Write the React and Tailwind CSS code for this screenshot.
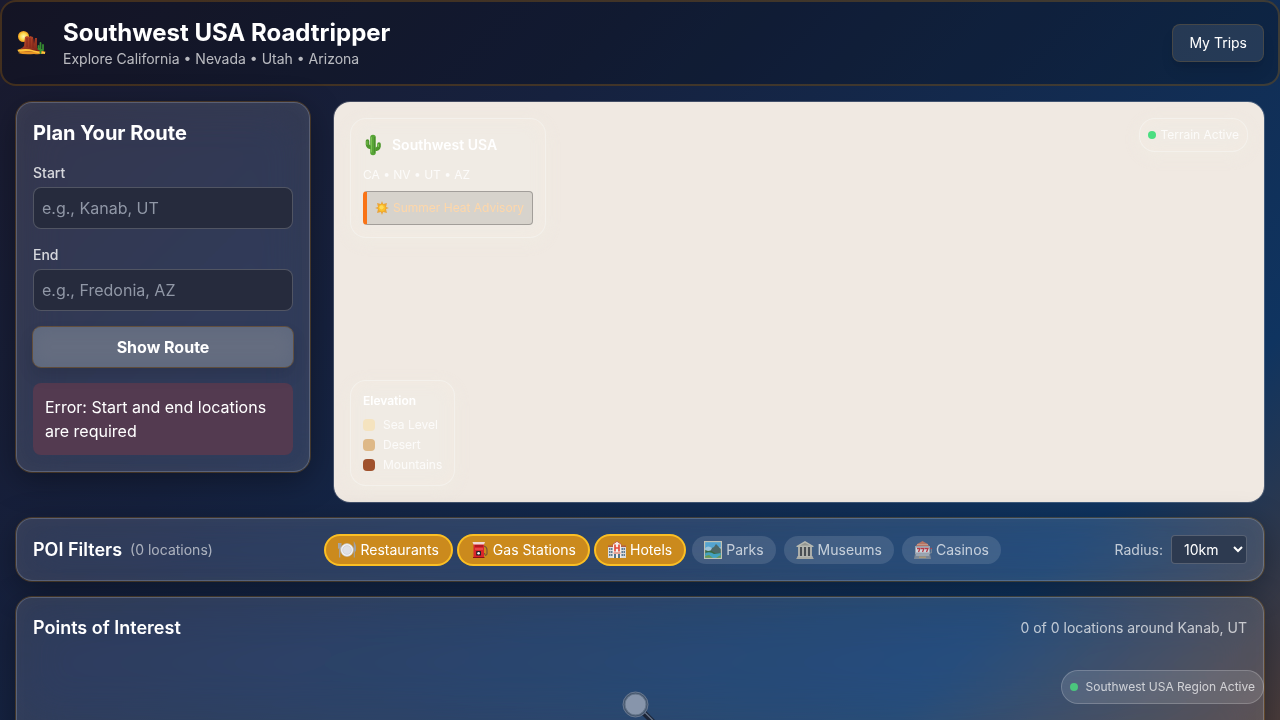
const panel =
  "rounded-2xl border border-white/20 bg-white/12 p-4 outline-1 outline-amber-500/20 backdrop-blur-xl backdrop-saturate-125 shadow-[0_8px_32px_rgba(0,0,0,0.35),inset_0_0_20px_rgba(255,255,255,0.03)]";
const mapCard =
  "absolute rounded-2xl border border-white/30 bg-[#f0ebe4] shadow-[0_4px_16px_rgba(240,236,226,0.6),inset_0_0_16px_rgba(245,233,224,0.6)]";

function DesertIcon() {
  return (
    <svg viewBox="0 0 31 26" className="h-[26px] w-[31px]" aria-hidden="true">
      <defs>
        <radialGradient id="desert-sun" cx="0.5" cy="0.5" r="0.5">
          <stop offset="0" stopColor="#fff6b0" />
          <stop offset="0.6" stopColor="#fbd84b" />
          <stop offset="1" stopColor="#f09a1c" />
        </radialGradient>
        <linearGradient id="desert-rock" x1="0" y1="0" x2="1" y2="1">
          <stop offset="0" stopColor="#c9502c" />
          <stop offset="1" stopColor="#6f1f17" />
        </linearGradient>
      </defs>
      <circle cx="7.5" cy="6.5" r="5.5" fill="url(#desert-sun)" />
      <path d="M1 20Q8 17 15 18T30 22Q26 25 18 24Q8 25 2 23Q6 22 1 20Z" fill="#e89524" />
      <path d="M4 20L8 16L9 7L11 6L13 7L14 6L17 7L18 14L19 8L21 8L21 18L26 21L18 22L7 21Z" fill="url(#desert-rock)" />
      <path d="M11 8V17M14 8V18M17 9V18" stroke="#7f2219" strokeWidth="0.8" />
      <path d="M2 21Q10 19 17 21T29 23" stroke="#ffc53c" strokeWidth="1.8" fill="none" />
      <path d="M24.500 23V13M22.500 16V19H24.500M27 15V20H24.500" stroke="#378b32" strokeWidth="1.8" strokeLinecap="round" strokeLinejoin="round" fill="none" />
    </svg>
  );
}

function CactusIcon() {
  return (
    <svg viewBox="0 0 21 22" className="h-[22px] w-[21px]" aria-hidden="true">
      <g fill="none" strokeLinecap="round" strokeLinejoin="round">
        <path d="M4.500 7V10.500Q5 13.500 9 13.500M16 10V12.500Q15.500 15.500 11 15.500" stroke="#4e962d" strokeWidth="3.6" />
        <path d="M10 3.500V18.500" stroke="#57a436" strokeWidth="5.600" />
        <path d="M8.500 3.500V18M4 7.500V10.500M15.500 10.500V12.500" stroke="#7cc352" strokeWidth="1" />
        <path d="M11.500 3.500V18.500" stroke="#4a8c30" strokeWidth="1" />
      </g>
    </svg>
  );
}

function SunIcon() {
  return (
    <svg viewBox="0 0 15 15" className="size-[14px]" aria-hidden="true">
      <path d="M7.500 0L8.700 3.200L12.800 2.200L11.800 6.300L15 7.500L11.800 8.700L12.800 12.800L8.700 11.800L7.500 15L6.300 11.800L2.200 12.800L3.200 8.700L0 7.500L3.200 6.300L2.200 2.200L6.300 3.200Z" fill="#e9a43c" />
      <circle cx="7.500" cy="7.500" r="4.200" fill="#fbc02d" stroke="#eda126" strokeWidth="0.6" />
      <circle cx="7" cy="6.800" r="2.200" fill="#ffdb58" />
    </svg>
  );
}

function PlateIcon() {
  return (
    <svg viewBox="0 0 18 18" className="size-[18px]" aria-hidden="true">
      <path d="M0.500 2V6Q0.500 8 1.700 8V16.500M2.900 2V6Q2.900 8 1.700 8M1.700 2V7" stroke="#a3a6ac" strokeWidth="1.100" fill="none" />
      <path d="M16.300 16.500V2Q18 5 17.300 10H16.300" stroke="#9da1a8" fill="#b9bdc3" strokeWidth="1.100" />
      <circle cx="9" cy="9" r="6.400" fill="#f4f4f5" stroke="#b9bcc2" strokeWidth="0.6" />
      <circle cx="9" cy="9" r="4.400" fill="#dfe0e4" stroke="#c6c8ce" strokeWidth="0.6" />
    </svg>
  );
}

function FuelIcon() {
  return (
    <svg viewBox="0 0 18 18" className="size-[18px]" aria-hidden="true">
      <path d="M13 5Q16 6 16 9V13Q14 16 13.500 12" stroke="#7a5638" strokeWidth="1.200" fill="none" />
      <rect x="2.500" y="2" width="10.500" height="15" rx="1" fill="#d9252c" />
      <path d="M1.500 1H14L13 3.500H2.500Z" fill="#efd9d5" />
      <rect x="4" y="4" width="8" height="2" fill="#b01a22" />
      <rect x="4" y="7.500" width="8" height="1" fill="#f26b63" />
      <rect x="5.200" y="10" width="4.800" height="4.500" rx="0.5" fill="#262328" />
      <circle cx="7.600" cy="12.200" r="1.300" fill="#f5f5f5" />
      <path d="M2 16.500H13.500" stroke="#8b1018" strokeWidth="1" />
    </svg>
  );
}

function HotelIcon() {
  return (
    <svg viewBox="0 0 18 18" className="size-[18px]" aria-hidden="true">
      <path d="M0 5H18V17H0Z" fill="#dcdcdc" />
      <path d="M0 4.500H5V6H0ZM13 4.500H18V6H13Z" fill="#b35c43" />
      <path d="M5 3L9 0L13 3V17H5Z" fill="#f4efeb" />
      <path d="M4.500 3.500L9 0.300L13.500 3.500" stroke="#c0553f" strokeWidth="1" fill="none" />
      <path d="M7 3.500V10.500M11 3.500V10.500M7 7H11" stroke="#e54a3b" strokeWidth="1.700" />
      <path d="M1 8H2.500M3 8H4.500M1 11H2.500M3 11H4.500M1 14H2.500M3 14H4.500M13.500 8H15M15.500 8H17M13.500 11H15M15.500 11H17M13.500 14H15M15.500 14H17" stroke="#627d94" strokeWidth="1.800" />
      <path d="M6 13H8V17H6ZM10 13H12V17H10Z" fill="#54758a" />
      <path d="M5.500 12H12.500" stroke="#d45b46" strokeWidth="1" />
    </svg>
  );
}

function ParkIcon() {
  return (
    <svg viewBox="0 0 18 18" className="size-[18px]" aria-hidden="true">
      <rect width="18" height="18" fill="#e0dbc2" />
      <rect x="1.200" y="1.200" width="15.600" height="15.600" fill="#58b6e4" />
      <path d="M1.200 7Q4 4 8 7L12 7L16.800 6V12H1.200Z" fill="#b5def0" />
      <path d="M6 11L8 7L10 6L12 3L14 5L16.800 8V12H6Z" fill="#506b62" />
      <path d="M1.200 9L4 10L7 9.500L11 12H16.800V14H1.200Z" fill="#3c6b35" />
      <path d="M1.200 12Q6 10 10 13L16.800 12V16.800H1.200Z" fill="#45b3cf" />
      <path d="M1.200 15L5 14L9 16.800H1.200ZM12 16.800L16.800 14V16.800Z" fill="#79a843" />
    </svg>
  );
}

function MuseumIcon() {
  return (
    <svg viewBox="0 0 18 18" className="size-[18px]" aria-hidden="true">
      <path d="M0.500 5L9 0L17.500 5V6H0.500Z" fill="#d4cfbd" />
      <path d="M4 4.500L9 1.800L14 4.500Z" fill="#a8a393" />
      <rect x="2" y="6" width="14" height="9" fill="#4c4b48" />
      <path d="M3 6V15M7 6V15M11 6V15M15 6V15" stroke="#d4cfbf" strokeWidth="1.800" />
      <path d="M2 15H16L18 18H0Z" fill="#b8b3a2" />
      <path d="M1.500 15.500H16.500M1 17H17" stroke="#dad5c5" strokeWidth="0.700" />
    </svg>
  );
}

function SlotIcon() {
  return (
    <svg viewBox="0 0 18 18" className="size-[18px]" aria-hidden="true">
      <path d="M2 5Q3 2 6 1.500L8.500 0L11 1.500Q14 2 15 5Z" fill="#d5795b" />
      <path d="M3 3.500H14" stroke="#e8b192" strokeWidth="0.800" />
      <path d="M1 5H16V13H1Z" fill="#adb2b8" />
      <rect x="2" y="6.500" width="13" height="5" fill="#f2f2f2" />
      <path d="M3 7.500H6L4.500 11M7 7.500H10L8.500 11M11 7.500H14L12.500 11" stroke="#d33137" strokeWidth="1.300" fill="none" />
      <path d="M1 13H16L17 18H0Z" fill="#8c9299" />
      <path d="M2 14H15" stroke="#d8dce0" strokeWidth="1" />
      <rect x="5" y="15.500" width="7" height="1.500" fill="#c3a674" />
      <path d="M16 12H17.300V8" stroke="#91969c" strokeWidth="1" fill="none" />
      <circle cx="17.200" cy="7.500" r="0.800" fill="#d53c3c" />
    </svg>
  );
}

function MagnifierIcon() {
  return (
    <svg viewBox="0 0 45 45" className="mx-auto size-[45px]" aria-hidden="true">
      <path d="M26 27L38 39" stroke="#1c2537" strokeWidth="5.500" strokeLinecap="round" />
      <path d="M27 26.500L38 37.500" stroke="#66748a" strokeWidth="1.200" strokeLinecap="round" />
      <circle cx="17.500" cy="18.500" r="11.500" fill="#8795ab" stroke="#45566d" strokeWidth="2.500" />
      <circle cx="17.500" cy="18.500" r="12.500" fill="none" stroke="#71829a" strokeWidth="0.800" />
      <circle cx="17.500" cy="18.500" r="10.500" fill="none" stroke="#6d7d92" strokeWidth="0.800" />
    </svg>
  );
}

const filters = [
  { Icon: PlateIcon, name: "Restaurants", on: true },
  { Icon: FuelIcon, name: "Gas Stations", on: true },
  { Icon: HotelIcon, name: "Hotels", on: true },
  { Icon: ParkIcon, name: "Parks", on: false },
  { Icon: MuseumIcon, name: "Museums", on: false },
  { Icon: SlotIcon, name: "Casinos", on: false },
];

const elevations = [
  { name: "Sea Level", swatch: "bg-[#f5e3bf]" },
  { name: "Desert", swatch: "bg-[#deb887]" },
  { name: "Mountains", swatch: "bg-[#a0522d]" },
];

function Field({ id, label, placeholder }) {
  return (
    <div className="mb-4">
      <label htmlFor={id} className="mb-1 block text-sm font-medium leading-5 text-white/80">{label}</label>
      <input
        id={id}
        type="text"
        placeholder={placeholder}
        className="block w-full rounded-lg border border-white/20 bg-[#262b3d] p-2 text-base leading-6 text-white placeholder:text-[#9097a6]"
      />
    </div>
  );
}

function Header() {
  return (
    <header className="flex items-center justify-between rounded-2xl border-2 border-amber-500/20 bg-black/20 px-3.5 py-[15px]">
      <div className="flex items-center gap-4">
        <DesertIcon />
        <div>
          <h1 className="text-2xl font-bold leading-8 text-white">Southwest USA Roadtripper</h1>
          <p className="text-sm leading-5 text-white/70">Explore California • Nevada • Utah • Arizona</p>
        </div>
      </div>
      <button type="button" className="rounded-lg border border-amber-500/15 bg-white/10 px-4 py-2 text-sm leading-5 text-white shadow-lg">My Trips</button>
    </header>
  );
}

function RoutePlanner() {
  return (
    <section className={panel}>
      <h2 className="mb-4 text-xl font-bold leading-7 text-white">Plan Your Route</h2>
      <Field id="start" label="Start" placeholder="e.g., Kanab, UT" />
      <Field id="end" label="End" placeholder="e.g., Fredonia, AZ" />
      <button type="button" className="w-full rounded-lg bg-[#656d80] py-2 text-base font-bold leading-6 text-white outline-1 outline-amber-500/25 shadow-[0_8px_16px_rgba(0,0,0,0.12),inset_0_0_16px_rgba(80,95,120,0.4)]">Show Route</button>
      <p className="mt-4 rounded-lg bg-[#533a50] p-3 text-base leading-6 text-white">Error: Start and end locations are required</p>
    </section>
  );
}

function TerrainMap() {
  return (
    <section className="relative h-[400px] overflow-hidden rounded-2xl bg-[#f0e9e2] outline-1 outline-white/20">
      <div className={`${mapCard} left-4 top-4 p-3`}>
        <div className="mb-2 flex h-7 items-center gap-2">
          <CactusIcon />
          <h3 className="text-sm font-semibold leading-5 text-white">Southwest USA</h3>
        </div>
        <p className="mb-2 text-xs leading-4 text-white/80">CA • NV • UT • AZ</p>
        <p className="flex items-center gap-1 rounded border border-l-4 border-black/25 border-l-[#f97316] bg-black/10 p-2 text-xs leading-4 text-[#fed7aa]">
          <SunIcon />
          Summer Heat Advisory
        </p>
      </div>
      <div className={`${mapCard} right-4 top-4 flex items-center gap-1 p-2`}>
        <span className="size-2 rounded-full bg-[#4ade80]" />
        <span className="text-xs leading-4 text-white/80">Terrain Active</span>
      </div>
      <div className={`${mapCard} bottom-4 left-4 p-3`}>
        <h3 className="mb-2 text-xs font-semibold leading-4 text-white">Elevation</h3>
        <ul className="space-y-1">
          {elevations.map((e) => (
            <li key={e.name} className="flex items-center gap-2 text-xs leading-4 text-white/80">
              <span className={`size-3 rounded-sm ${e.swatch}`} />
              {e.name}
            </li>
          ))}
        </ul>
      </div>
    </section>
  );
}

function Filters() {
  return (
    <section className={`flex items-center justify-between ${panel}`}>
      <div className="flex items-center gap-2">
        <h2 className="text-lg font-semibold leading-7 text-white">POI Filters</h2>
        <span className="text-sm leading-5 text-white/60">(0 locations)</span>
      </div>
      <div className="flex items-center gap-2">
        {filters.map(({ Icon, name, on }) => (
          <button
            key={name}
            type="button"
            aria-pressed={on}
            className={
              on
                ? "flex items-center gap-1 rounded-full bg-[#cb8a1d] px-3 py-1 text-sm leading-5 text-white ring-2 ring-[#fbbf24]"
                : "flex items-center gap-1 rounded-full bg-white/12 px-3 py-1 text-sm leading-5 text-white/70"
            }
          >
            <span className={on ? "" : "opacity-80"}><Icon /></span>
            {name}
          </button>
        ))}
      </div>
      <div className="flex items-center gap-2">
        <label htmlFor="radius" className="text-sm leading-5 text-white/70">Radius:</label>
        <select id="radius" defaultValue="10km" className="rounded border border-white/20 bg-[#2d3a50] px-2 py-1 text-sm leading-5 text-white">
          <option>5km</option>
          <option>10km</option>
          <option>25km</option>
          <option>50km</option>
        </select>
      </div>
    </section>
  );
}

function PointsOfInterest() {
  return (
    <section className={panel}>
      <div className="flex items-center justify-between">
        <h2 className="text-lg font-semibold leading-7 text-white">Points of Interest</h2>
        <p className="text-sm leading-5 text-white/70">0 of 0 locations around Kanab, UT</p>
      </div>
      <div className="pb-12 pt-11">
        <MagnifierIcon />
      </div>
    </section>
  );
}

export default function App() {
  return (
    <div className="min-h-screen bg-[linear-gradient(135deg,#1a1a2e_0px,#16213e_460px,#0f3460_1142px,#8b4513_1711px)] font-['Inter',sans-serif]">
      <Header />
      <main className="flex flex-col gap-4 p-4">
        <div className="grid grid-cols-[294px_minmax(0,1fr)] items-start gap-6">
          <RoutePlanner />
          <TerrainMap />
        </div>
        <Filters />
        <PointsOfInterest />
      </main>
      <div className="fixed bottom-4 right-4 flex items-center gap-2 rounded-full border border-white/20 bg-white/12 p-2">
        <span className="size-2 rounded-full bg-[#4bc67d]" />
        <span className="text-xs leading-4 text-white/70">Southwest USA Region Active</span>
      </div>
    </div>
  );
}
